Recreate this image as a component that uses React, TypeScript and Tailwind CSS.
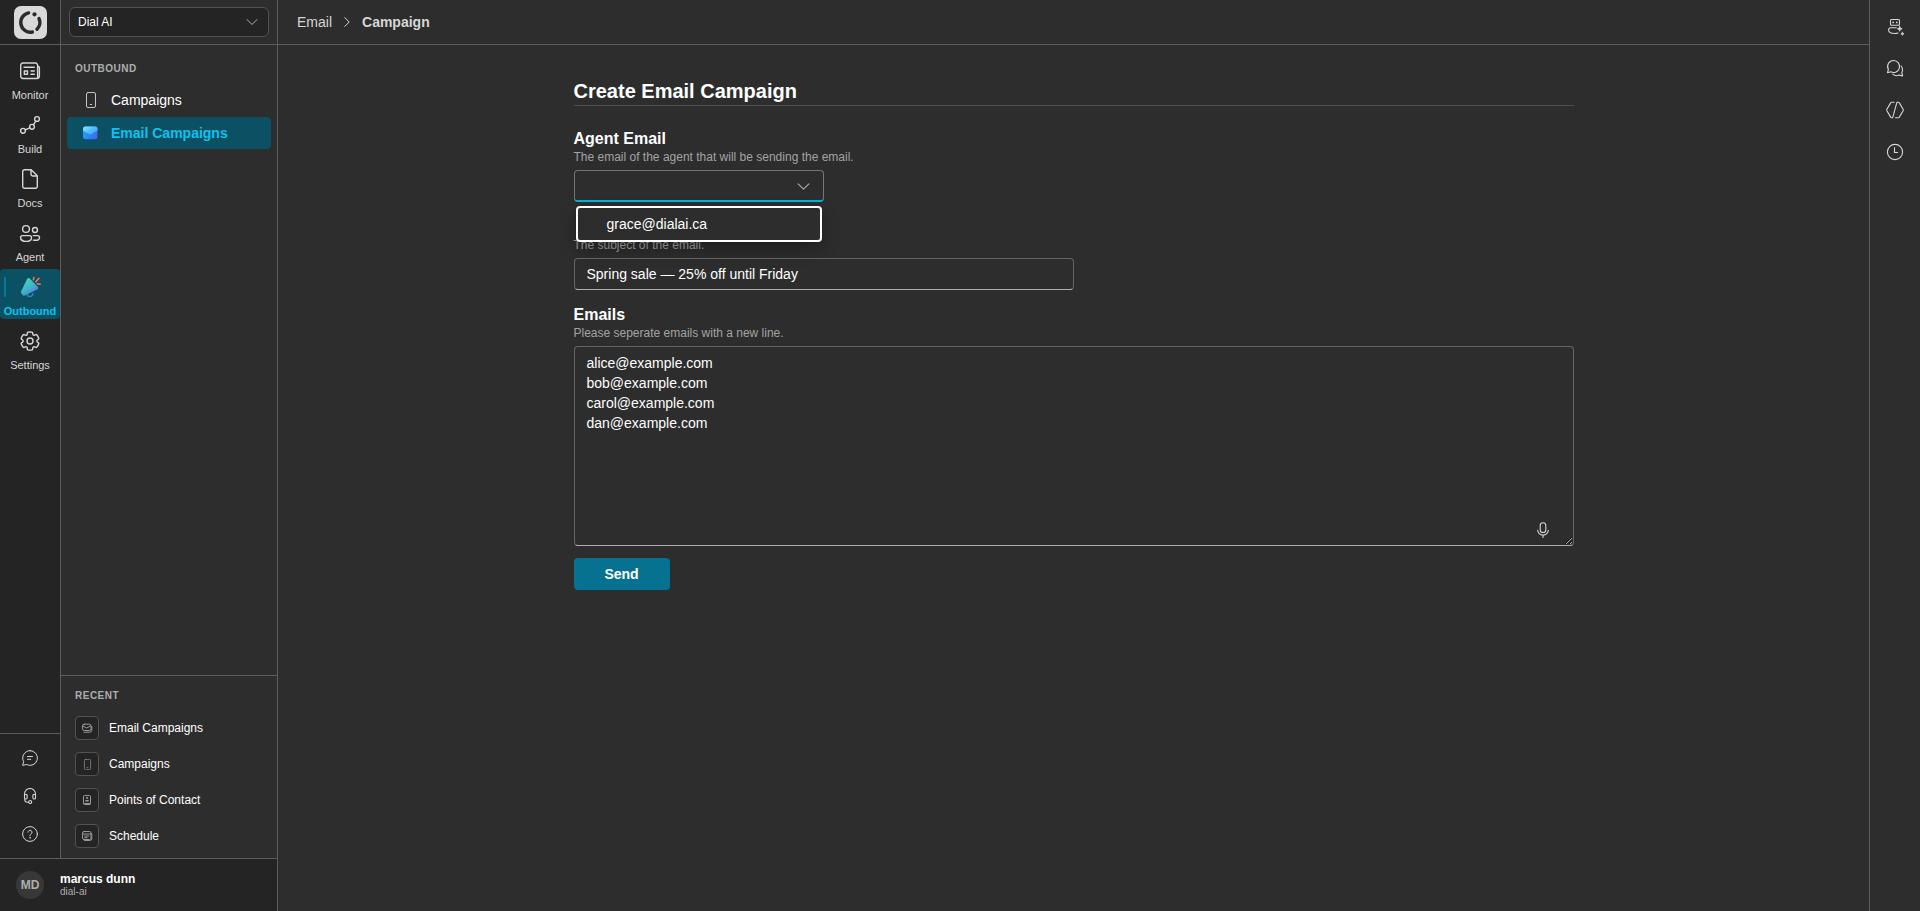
import { useState } from "react";
import type { ReactNode } from "react";

type IconProps = { className?: string };

function Line({
  size = 24,
  width = 1.4,
  className = "",
  children,
}: IconProps & { size?: number; width?: number; children: ReactNode }) {
  return (
    <svg
      viewBox={`0 0 ${size} ${size}`}
      fill="none"
      stroke="currentColor"
      strokeWidth={width}
      strokeLinecap="round"
      strokeLinejoin="round"
      aria-hidden="true"
      className={`shrink-0 ${className}`}
    >
      {children}
    </svg>
  );
}

const GEAR =
  "M12.0122 2.25C12.7462 2.25846 13.4773 2.34326 14.1937 2.50304C14.5064 2.57279 14.7403 2.83351 14.7758 3.15196L14.946 4.67881C15.0231 5.37986 15.615 5.91084 16.3206 5.91158C16.5103 5.91188 16.6979 5.87238 16.8732 5.79483L18.2738 5.17956C18.5651 5.05159 18.9055 5.12136 19.1229 5.35362C20.1351 6.43464 20.8889 7.73115 21.3277 9.14558C21.4223 9.45058 21.3134 9.78203 21.0564 9.9715L19.8149 10.8866C19.4607 11.1468 19.2516 11.56 19.2516 11.9995C19.2516 12.4389 19.4607 12.8521 19.8157 13.1129L21.0582 14.0283C21.3153 14.2177 21.4243 14.5492 21.3297 14.8543C20.8911 16.2685 20.1377 17.5649 19.1261 18.6461C18.9089 18.8783 18.5688 18.9483 18.2775 18.8206L16.8712 18.2045C16.4688 18.0284 16.0068 18.0542 15.6265 18.274C15.2463 18.4937 14.9933 18.8812 14.945 19.3177L14.7759 20.8444C14.741 21.1592 14.5122 21.4182 14.204 21.4915C12.7556 21.8361 11.2465 21.8361 9.79803 21.4915C9.48991 21.4182 9.26105 21.1592 9.22618 20.8444L9.05736 19.32C9.00777 18.8843 8.75434 18.498 8.37442 18.279C7.99451 18.06 7.5332 18.0343 7.1322 18.2094L5.72557 18.8256C5.43422 18.9533 5.09403 18.8833 4.87678 18.6509C3.86462 17.5685 3.11119 16.2705 2.6732 14.8548C2.57886 14.5499 2.68786 14.2186 2.94485 14.0293L4.18818 13.1133C4.54232 12.8531 4.75147 12.4399 4.75147 12.0005C4.75147 11.561 4.54232 11.1478 4.18771 10.8873L2.94516 9.97285C2.6878 9.78345 2.5787 9.45178 2.67337 9.14658C3.11212 7.73215 3.86594 6.43564 4.87813 5.35462C5.09559 5.12236 5.43594 5.05259 5.72724 5.18056L7.12762 5.79572C7.53056 5.97256 7.9938 5.94585 8.37577 5.72269C8.75609 5.50209 9.00929 5.11422 9.05817 4.67764L9.22824 3.15196C9.26376 2.83335 9.49786 2.57254 9.8108 2.50294C10.5281 2.34342 11.26 2.25865 12.0122 2.25Z";

function Logo() {
  return (
    <svg viewBox="0 0 33 33" className="size-[33px]" aria-hidden="true">
      <rect width="33" height="33" rx="7" fill="#d9d9d9" />
      <g fill="none" stroke="#2b2b2b" strokeWidth="3.4" strokeLinecap="round">
        <path d="M14.6 6.9A9.7 9.700 0 0 0 18.400 26" />
        <path d="M25 12.500A9.700 9.700 0 0 1 23 23.200" />
      </g>
      <circle cx="20.500" cy="8.300" r="2.100" fill="#2b2b2b" />
    </svg>
  );
}

const NewsIcon = () => (
  <Line className="size-6">
    <path d="M19.600 18.200V6.200a2.200 2.200 0 0 0-2.200-2.200H4.900a2.200 2.200 0 0 0-2.200 2.200v10.900a2.400 2.400 0 0 0 2.400 2.400H19a2.400 2.400 0 0 0 2.400-2.400V9.100a1.800 1.800 0 0 0-1.800-1.800" />
    <path d="M6 8.200h10.300M13 12h3.300M13 15.300h3.300M6.300 12h3.200v3.300H6.300z" />
  </Line>
);

const FlowIcon = () => (
  <Line className="size-6">
    <circle cx="5" cy="17.800" r="2.400" />
    <circle cx="14" cy="13.800" r="2.400" />
    <circle cx="19" cy="6" r="2.400" />
    <path d="m7.300 16.800 4.500-2M15.400 11.800l2.400-3.700" />
  </Line>
);

const DocIcon = () => (
  <Line className="size-6">
    <path d="M6.400 2.700h6.800l6.100 6.100v10.800a1.700 1.700 0 0 1-1.700 1.700H6.400a1.700 1.700 0 0 1-1.700-1.700V4.400a1.700 1.700 0 0 1 1.700-1.700zM13 2.900v4.400A1.700 1.700 0 0 0 14.700 9h4.400" />
  </Line>
);

const PeopleIcon = () => (
  <Line className="size-6">
    <circle cx="8" cy="8" r="3.400" />
    <circle cx="17" cy="9" r="2.500" />
    <path d="M4.400 14.600h7.300a1.800 1.800 0 0 1 1.800 1.800c0 2.500-2.200 4-5.400 4s-5.500-1.500-5.500-4a1.800 1.800 0 0 1 1.800-1.800z" />
    <path d="M15.200 14.600h4.500a1.800 1.800 0 0 1 1.800 1.800c0 1.900-1.700 2.900-4.300 2.900-.7 0-1.300-.1-1.900-.2" />
  </Line>
);

const MegaphoneIcon = () => (
  <svg viewBox="0 0 24 24" className="size-6 shrink-0" aria-hidden="true">
    <defs>
      <linearGradient id="horn" x1="6" y1="6" x2="15" y2="20" gradientUnits="userSpaceOnUse">
        <stop offset="0" stopColor="#3bd5bb" />
        <stop offset="0.5" stopColor="#3fb6c9" />
        <stop offset="1" stopColor="#5b72d6" />
      </linearGradient>
    </defs>
    <path d="M9 19.2c.3 1.900 1.700 2.700 3.300 2.300 1.700-.4 2.800-1.700 2.400-3.500" fill="none" stroke="#1f8fc0" strokeWidth="1.500" />
    <path d="M9 4.200c.6-1.300 2-1.500 3-.5l7.700 8c.9 1 .7 2.300-.5 2.900L6.900 20.600c-.7.300-1.400.2-1.900-.4l-1.600-1.700c-.5-.5-.6-1.200-.3-1.900z" fill="url(#horn)" />
    <path d="m15.400 4.800.5-2.200M17.800 6.700l3.200-3.500M19.200 8.800l3 .4" fill="none" stroke="#ff7a4f" strokeWidth="1.500" strokeLinecap="round" />
  </svg>
);

const GearIcon = () => (
  <Line className="size-6" width={1.5}>
    <g transform="translate(.72 .72) scale(.94)">
      <path d={GEAR} />
      <circle cx="12" cy="12" r="3.200" />
    </g>
  </Line>
);

const ChatIcon = () => (
  <Line size={16} width={1} className="size-4">
    <path d="M8 .6a7.400 7.400 0 1 1-3.500 13.900L.7 15.400l.9-3.800A7.400 7.400 0 0 1 8 .6zM5.500 6.500h5M5.500 9.300h3.200" />
  </Line>
);

const HeadsetIcon = () => (
  <Line size={16} width={1.1} className="size-4">
    <path d="M2.500 9.500V6a5.500 5.500 0 0 1 11 0v3.500M2.500 6.500h1.700a.9.900 0 0 1 .9.900v2.700a.9.900 0 0 1-.9.900h-.7a1 1 0 0 1-1-1zM13.500 6.500h-1.700a.9.900 0 0 0-.9.900v2.700a.9.900 0 0 0 .9.900h.7a1 1 0 0 0 1-1zM2.800 10.800v.9a2.500 2.500 0 0 0 2.500 2.500h1.200" />
    <circle cx="8.200" cy="14" r="1.500" />
  </Line>
);

const HelpIcon = () => (
  <Line size={16} width={1} className="size-4">
    <circle cx="8" cy="8" r="7.400" />
    <path d="M6 6.200a2 2 0 1 1 3.100 1.700C8.400 8.400 8 8.800 8 9.700" />
    <circle cx="8" cy="11.800" r=".3" />
  </Line>
);

const PhoneIcon = ({ className = "" }: IconProps) => (
  <Line size={16} width={1} className={className}>
    <rect x="3.500" y=".5" width="9" height="15" rx="1.500" />
    <path d="M7.200 12.500h1.600" />
  </Line>
);

const MailColorIcon = () => (
  <svg viewBox="0 0 16 16" className="size-4 shrink-0" aria-hidden="true">
    <defs>
      <linearGradient id="mailBody" x1="2" y1="6" x2="14" y2="15" gradientUnits="userSpaceOnUse">
        <stop offset="0" stopColor="#2a9bff" />
        <stop offset="0.6" stopColor="#2f7df5" />
        <stop offset="1" stopColor="#6a4de0" />
      </linearGradient>
      <linearGradient id="mailFlap" x1="4" y1="1" x2="12" y2="10" gradientUnits="userSpaceOnUse">
        <stop offset="0" stopColor="#6ce0ff" />
        <stop offset="1" stopColor="#3f9cff" />
      </linearGradient>
    </defs>
    <rect x="0" y="1.500" width="14.500" height="12.700" rx="2.500" fill="url(#mailBody)" />
    <path d="M2.500 1.500H12A2.500 2.500 0 0 1 14.500 4v1.500L7.800 9.300a1.200 1.200 0 0 1-1.200 0L0 5.500V4a2.500 2.500 0 0 1 2.500-2.500z" fill="url(#mailFlap)" />
  </svg>
);

const MailSmallIcon = () => (
  <Line size={12} width={1} className="size-3">
    <rect x="1.500" y="2.200" width="8.500" height="6.300" rx="1.800" />
    <path d="m1.900 4 3.800 2 3.800-2M3 10.200h5.800a2 2 0 0 0 2-2V4.500" />
  </Line>
);

const ContactIcon = () => (
  <Line size={12} width={1} className="size-3">
    <path d="M2.500 2.500a1 1 0 0 1 1-1h5a1 1 0 0 1 1 1v7h-6a1 1 0 0 1-1-1zM2.500 8.700v.8a1 1 0 0 0 1 1h5.500" />
    <circle cx="6" cy="4" r=".6" fill="currentColor" />
    <path d="M4.900 6.700h2.200" strokeWidth="1.600" />
  </Line>
);

const CalendarIcon = () => (
  <Line size={12} width={1} className="size-3">
    <rect x="1.500" y="1.500" width="8.500" height="8" rx="1.500" />
    <path d="M1.500 4h8.500M3.700 6h4M3.700 7.700h2.500M3.500 10.500h5.300a2 2 0 0 0 2-2V4" />
  </Line>
);

const ChevronDown = ({ className = "" }: IconProps) => (
  <Line size={12} width={1} className={className}>
    <path d="m1 3.500 5 5 5-5" />
  </Line>
);

const BotIcon = () => (
  <Line size={18} width={1.1} className="size-[18px] overflow-visible">
    <path d="M5.500 2.500h7a1 1 0 0 1 1 1v3.700a1 1 0 0 1-1 1h-7a1 1 0 0 1-1-1V3.500a1 1 0 0 1 1-1zM10.300 10.800H4.500a1.900 1.900 0 0 0-1.900 1.900c0 2.500 2.500 3.800 6 3.800 1.300 0 2.400-.1 3.400-.5" />
    <path d="M7.200 5.400h.01M10.800 5.400h.01" strokeWidth="1.700" />
    <path d="m13.700 9.300.7 1.800 1.800.7-1.800.7-.7 1.800-.7-1.800-1.800-.7 1.800-.7zM16.400 15.200l.4 1.200 1.200.4-1.200.4-.4 1.200-.4-1.200-1.200-.4 1.200-.4z" fill="currentColor" strokeWidth=".7" />
  </Line>
);

const ChatsIcon = () => (
  <Line size={18} width={1.1} className="size-[18px]">
    <path d="M7.600 1.500a6 6 0 1 1-2.800 11.300l-3.300.9.900-3.200A6 6 0 0 1 7.600 1.500z" />
    <path d="M6.700 15.100a6 6 0 0 0 6.400 1l3.500.8-.8-3.400a6 6 0 0 0-.7-6.500" />
  </Line>
);

const CodeIcon = () => (
  <Line size={18} width={1.1} className="size-[18px]">
    <path d="M8.200 1.300H5.800a1.500 1.500 0 0 0-1.300.8L.9 8.300a1.500 1.500 0 0 0 0 1.400l3.600 6.200a1.500 1.500 0 0 0 1.300.8h.9L10.900 1.300h1.300a1.500 1.500 0 0 1 1.300.8l3.600 6.200a1.500 1.500 0 0 1 0 1.400l-3.600 6.200a1.500 1.500 0 0 1-1.300.8H9.500" />
  </Line>
);

const ClockIcon = () => (
  <Line size={18} width={1.1} className="size-[18px]">
    <circle cx="9" cy="9" r="7.600" />
    <path d="M8.500 4.500v5h3.200" />
  </Line>
);

const MicIcon = () => (
  <Line size={16} width={1.1} className="size-4">
    <rect x="5.200" y=".7" width="5.600" height="9.800" rx="2.800" />
    <path d="M2.700 8.300a5.300 4.800 0 0 0 10.600 0M8 13.200v2.200" />
  </Line>
);

const railItems = [
  { label: "Monitor", icon: <NewsIcon /> },
  { label: "Build", icon: <FlowIcon /> },
  { label: "Docs", icon: <DocIcon /> },
  { label: "Agent", icon: <PeopleIcon /> },
  { label: "Outbound", icon: <MegaphoneIcon />, active: true },
  { label: "Settings", icon: <GearIcon /> },
];

const railTools = [
  { label: "Feedback", icon: <ChatIcon /> },
  { label: "Support", icon: <HeadsetIcon /> },
  { label: "Help", icon: <HelpIcon /> },
];

const recent = [
  { label: "Email Campaigns", icon: <MailSmallIcon /> },
  { label: "Campaigns", icon: <PhoneIcon className="size-[11px]" /> },
  { label: "Points of Contact", icon: <ContactIcon /> },
  { label: "Schedule", icon: <CalendarIcon /> },
];

const panelTools = [
  { label: "Assistant", icon: <BotIcon /> },
  { label: "Conversations", icon: <ChatsIcon /> },
  { label: "Code", icon: <CodeIcon /> },
  { label: "History", icon: <ClockIcon /> },
];

function NavRail() {
  return (
    <div className="flex w-[61px] shrink-0 flex-col border-r border-[#5c5c5c] bg-[#242424] text-[#d6d6d6]">
      <a
        href="#home"
        aria-label="Home"
        className="flex h-[45px] shrink-0 items-center justify-center border-b border-[#5c5c5c]"
      >
        <Logo />
      </a>
      <nav aria-label="Primary" className="flex grow flex-col gap-1 pt-2">
        {railItems.map((item) => (
          <a
            key={item.label}
            href={`#${item.label.toLowerCase()}`}
            aria-current={item.active ? "page" : undefined}
            className={
              item.active
                ? "relative flex h-[50px] flex-col items-center gap-1 rounded bg-[#0c5063] pt-1.5 text-[11px] leading-4 font-bold text-[#12c1ee]"
                : "flex h-[50px] flex-col items-center gap-1 rounded pt-1.5 text-[11px] leading-4"
            }
          >
            {item.active && <span className="absolute top-2 left-1 h-5 w-0.5 rounded-full bg-[#067a99]" />}
            {item.icon}
            {item.label}
          </a>
        ))}
      </nav>
      <div className="flex flex-col border-t border-[#5c5c5c] py-[5px]">
        {railTools.map((tool) => (
          <button key={tool.label} type="button" aria-label={tool.label} className="flex h-[38px] items-center justify-center">
            {tool.icon}
          </button>
        ))}
      </div>
    </div>
  );
}

function SectionTitle({ children }: { children: ReactNode }) {
  return <h2 className="pl-3.5 text-[10px] leading-4 font-bold tracking-wider text-[#adadad] uppercase">{children}</h2>;
}

function SideMenu() {
  return (
    <div className="flex min-w-0 grow flex-col">
      <div className="flex h-[45px] shrink-0 items-center border-b border-[#5c5c5c] px-2">
        <div className="grid w-full items-center">
          <select
            aria-label="Workspace"
            className="col-start-1 row-start-1 h-[30px] w-full appearance-none rounded-md border border-[#525252] bg-[#242424] pr-8 pl-2 text-xs text-white"
          >
            <option>Dial AI</option>
          </select>
          <ChevronDown className="pointer-events-none col-start-1 row-start-1 mr-[11px] size-3 justify-self-end text-[#adadad]" />
        </div>
      </div>
      <nav aria-label="Outbound" className="flex grow flex-col pt-4">
        <SectionTitle>Outbound</SectionTitle>
        <div className="flex flex-col gap-px px-1.5 pt-[7px]">
          <a href="#campaigns" className="flex h-8 items-center gap-3 rounded pl-4 text-sm text-white">
            <PhoneIcon className="size-4 text-[#c4c4c4]" />
            Campaigns
          </a>
          <a
            href="#email-campaigns"
            aria-current="page"
            className="flex h-8 items-center gap-3 rounded bg-[#0c5063] pl-4 text-sm font-bold text-[#12c1ee]"
          >
            <MailColorIcon />
            Email Campaigns
          </a>
        </div>
      </nav>
      <div className="border-t border-[#5c5c5c] pt-3 pb-1">
        <SectionTitle>Recent</SectionTitle>
        <div className="flex flex-col pt-1.5">
          {recent.map((item) => (
            <a key={item.label} href="#recent" className="flex h-9 items-center gap-2.5 pl-3.5 text-xs text-white">
              <span className="flex size-6 items-center justify-center rounded border border-[#525252] bg-[#242424] text-[#999999]">
                {item.icon}
              </span>
              {item.label}
            </a>
          ))}
        </div>
      </div>
    </div>
  );
}

function Field({
  id,
  label,
  hint,
  children,
}: {
  id: string;
  label?: string;
  hint: string;
  children: ReactNode;
}) {
  return (
    <div className="flex flex-col">
      <label htmlFor={id} className="h-6 pt-0.5 text-base leading-[22px] font-bold text-white">
        {label}
      </label>
      <p id={`${id}-hint`} className="mb-1.5 text-xs leading-[14px] text-[#a3a3a3]">
        {hint}
      </p>
      {children}
    </div>
  );
}

const agents = ["grace@dialai.ca"];

function AgentSelect() {
  const [open, setOpen] = useState(true);
  const [value, setValue] = useState("");
  return (
    <div className="relative grid w-[250px] max-w-full items-center">
      <select
        id="agent"
        aria-describedby="agent-hint"
        value={value}
        onChange={(e) => setValue(e.target.value)}
        onMouseDown={(e) => {
          e.preventDefault();
          setOpen(!open);
        }}
        className="col-start-1 row-start-1 h-8 w-full appearance-none rounded border border-b-2 border-[#757575] border-b-[#06b0d4] bg-[#2d2d2d] px-3 text-sm text-white outline-none"
      >
        <option value="" />
        {agents.map((agent) => (
          <option key={agent}>{agent}</option>
        ))}
      </select>
      <ChevronDown className="pointer-events-none col-start-1 row-start-1 mr-3.5 size-[13px] justify-self-end text-[#adadad]" />
      {open && (
        <ul
          role="listbox"
          aria-label="Agent Email"
          className="absolute inset-x-0.5 top-full z-10 mt-1 rounded bg-[#2d2d2d] shadow-[0_8px_16px_rgba(0,0,0,0.28),0_0_2px_rgba(0,0,0,0.24)]"
        >
          {agents.map((agent) => (
            <li
              key={agent}
              role="option"
              aria-selected={value === agent}
              onClick={() => {
                setValue(agent);
                setOpen(false);
              }}
              className="flex h-9 cursor-pointer items-center rounded border-2 border-white pl-[29px] text-sm text-white"
            >
              {agent}
            </li>
          ))}
        </ul>
      )}
    </div>
  );
}

function CampaignForm() {
  return (
    <form className="mx-auto w-full max-w-[1000px] pt-8" onSubmit={(e) => e.preventDefault()}>
      <h1 className="mb-5 border-b border-[#525252] text-xl leading-7 font-bold text-white">Create Email Campaign</h1>
      <div className="flex flex-col gap-3">
        <Field id="agent" label="Agent Email" hint="The email of the agent that will be sending the email.">
          <AgentSelect />
        </Field>
        <Field id="subject" hint="The subject of the email.">
          <input
            id="subject"
            type="text"
            aria-label="Subject"
            aria-describedby="subject-hint"
            defaultValue="Spring sale — 25% off until Friday"
            className="h-8 w-[500px] max-w-full rounded border border-[#666666] border-b-[#adadad] bg-transparent px-3 text-sm text-white outline-none"
          />
        </Field>
        <Field id="emails" label="Emails" hint="Please seperate emails with a new line.">
          <div className="relative flex">
            <textarea
              id="emails"
              aria-describedby="emails-hint"
              defaultValue={"alice@example.com\nbob@example.com\ncarol@example.com\ndan@example.com"}
              className="h-[200px] w-full rounded border border-[#666666] border-b-[#adadad] bg-transparent px-3 py-1.5 text-sm leading-5 text-white outline-none"
            />
            <button type="button" aria-label="Dictate" className="absolute right-[23px] bottom-2 text-[#d6d6d6]">
              <MicIcon />
            </button>
          </div>
        </Field>
        <button type="submit" className="h-8 w-24 rounded bg-[#06728f] text-sm font-bold text-white">
          Send
        </button>
      </div>
    </form>
  );
}

export default function App() {
  return (
    <div className="flex h-screen bg-[#2d2d2d] font-['Liberation_Sans',Arial,sans-serif] scheme-dark">
      <aside className="flex w-[278px] shrink-0 flex-col border-r border-[#5c5c5c]">
        <div className="flex min-h-0 grow">
          <NavRail />
          <SideMenu />
        </div>
        <button
          type="button"
          className="flex h-[53px] shrink-0 items-center gap-4 border-t border-[#5c5c5c] bg-[#242424] pl-4 text-left"
        >
          <span className="flex size-7 items-center justify-center rounded-full bg-[#383838] text-xs font-bold text-[#adadad]">
            MD
          </span>
          <span className="flex flex-col">
            <span className="text-xs leading-[14px] font-bold text-white">marcus dunn</span>
            <span className="text-[10px] leading-3 text-[#adadad]">dial-ai</span>
          </span>
        </button>
      </aside>

      <div className="flex min-w-0 grow flex-col">
        <header className="flex h-[45px] shrink-0 items-center border-b border-[#5c5c5c] pl-[19px]">
          <nav aria-label="Breadcrumb" className="flex items-center gap-2.5 text-sm text-[#d6d6d6]">
            <a href="#email">Email</a>
            <Line size={10} width={1} className="size-2.5">
              <path d="M2.800.6 7.200 5 2.800 9.400" />
            </Line>
            <span aria-current="page" className="font-bold">
              Campaign
            </span>
          </nav>
        </header>
        <main className="grow overflow-auto">
          <CampaignForm />
        </main>
      </div>

      <aside aria-label="Tools" className="flex w-[51px] shrink-0 flex-col border-l border-[#5c5c5c] pt-[5px] text-[#d6d6d6]">
        {panelTools.map((tool) => (
          <button key={tool.label} type="button" aria-label={tool.label} className="flex h-[42px] items-center justify-center">
            {tool.icon}
          </button>
        ))}
      </aside>
    </div>
  );
}
